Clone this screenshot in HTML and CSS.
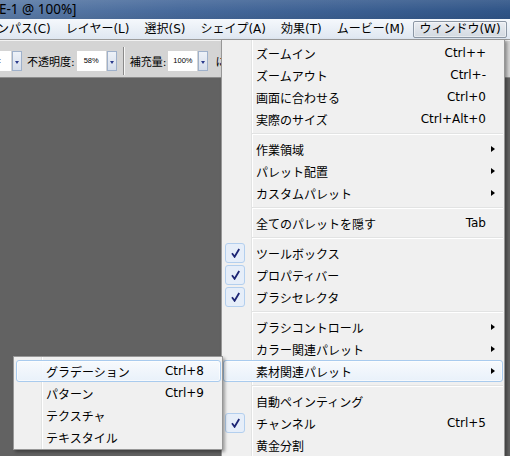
FILE: index.html
```html
<!DOCTYPE html>
<html lang="ja">
<head>
<meta charset="utf-8">
<title>Window menu</title>
<link rel="stylesheet" href="styles.css">
</head>
<body>
<div class="win">
  <div class="titlebar"><span class="title">E-1 @ 100%]</span></div>
  <div class="menubar">
    <span class="mb-item">ンパス(C)</span>
    <span class="mb-item">レイヤー(L)</span>
    <span class="mb-item">選択(S)</span>
    <span class="mb-item">シェイプ(A)</span>
    <span class="mb-item">効果(T)</span>
    <span class="mb-item">ムービー(M)</span>
    <span class="mb-item open">ウィンドウ(W)</span>
  </div>
  <div class="toolbar">
    <div class="combo first"><span class="field"><span class="cut">:</span></span><span class="btn"><i></i></span></div>
    <span class="tlabel">不透明度:</span>
    <div class="combo"><span class="field">58%</span><span class="btn"><i></i></span></div>
    <span class="tsep"></span>
    <span class="tlabel">補充量:</span>
    <div class="combo"><span class="field">100%</span><span class="btn"><i></i></span></div>
    <span class="tlabel ni">に</span>
  </div>
  <div class="canvas"></div>

  <div class="menu main">
    <div class="item"><span class="gut"></span><span class="lbl">ズームイン</span><span class="sc">Ctrl++</span><span class="arr"></span></div>
    <div class="item"><span class="gut"></span><span class="lbl">ズームアウト</span><span class="sc">Ctrl+-</span><span class="arr"></span></div>
    <div class="item"><span class="gut"></span><span class="lbl">画面に合わせる</span><span class="sc">Ctrl+0</span><span class="arr"></span></div>
    <div class="item"><span class="gut"></span><span class="lbl">実際のサイズ</span><span class="sc">Ctrl+Alt+0</span><span class="arr"></span></div>
    <div class="sep"></div>
    <div class="item"><span class="gut"></span><span class="lbl">作業領域</span><span class="sc"></span><span class="arr"><i></i></span></div>
    <div class="item"><span class="gut"></span><span class="lbl">パレット配置</span><span class="sc"></span><span class="arr"><i></i></span></div>
    <div class="item"><span class="gut"></span><span class="lbl">カスタムパレット</span><span class="sc"></span><span class="arr"><i></i></span></div>
    <div class="sep"></div>
    <div class="item"><span class="gut"></span><span class="lbl">全てのパレットを隠す</span><span class="sc">Tab</span><span class="arr"></span></div>
    <div class="sep"></div>
    <div class="item"><span class="gut"><span class="chk"><svg width="9" height="10" viewBox="0 0 9 10"><path d="M1 5.2 L3.6 8.8 L8.2 1" fill="none" stroke="#1d2574" stroke-width="1.8"/></svg></span></span><span class="lbl">ツールボックス</span><span class="sc"></span><span class="arr"></span></div>
    <div class="item"><span class="gut"><span class="chk"><svg width="9" height="10" viewBox="0 0 9 10"><path d="M1 5.2 L3.6 8.8 L8.2 1" fill="none" stroke="#1d2574" stroke-width="1.8"/></svg></span></span><span class="lbl">プロパティバー</span><span class="sc"></span><span class="arr"></span></div>
    <div class="item"><span class="gut"><span class="chk"><svg width="9" height="10" viewBox="0 0 9 10"><path d="M1 5.2 L3.6 8.8 L8.2 1" fill="none" stroke="#1d2574" stroke-width="1.8"/></svg></span></span><span class="lbl">ブラシセレクタ</span><span class="sc"></span><span class="arr"></span></div>
    <div class="sep"></div>
    <div class="item"><span class="gut"></span><span class="lbl">ブラシコントロール</span><span class="sc"></span><span class="arr"><i></i></span></div>
    <div class="item"><span class="gut"></span><span class="lbl">カラー関連パレット</span><span class="sc"></span><span class="arr"><i></i></span></div>
    <div class="item hl"><span class="gut"></span><span class="lbl">素材関連パレット</span><span class="sc"></span><span class="arr"><i></i></span></div>
    <div class="sep"></div>
    <div class="item"><span class="gut"></span><span class="lbl">自動ペインティング</span><span class="sc"></span><span class="arr"></span></div>
    <div class="item"><span class="gut"><span class="chk"><svg width="9" height="10" viewBox="0 0 9 10"><path d="M1 5.2 L3.6 8.8 L8.2 1" fill="none" stroke="#1d2574" stroke-width="1.8"/></svg></span></span><span class="lbl">チャンネル</span><span class="sc">Ctrl+5</span><span class="arr"></span></div>
    <div class="item"><span class="gut"></span><span class="lbl">黄金分割</span><span class="sc"></span><span class="arr"></span></div>
  </div>

  <div class="menu sub">
    <div class="item hl"><span class="gut"></span><span class="lbl">グラデーション</span><span class="sc">Ctrl+8</span><span class="arr"></span></div>
    <div class="item"><span class="gut"></span><span class="lbl">パターン</span><span class="sc">Ctrl+9</span><span class="arr"></span></div>
    <div class="item"><span class="gut"></span><span class="lbl">テクスチャ</span><span class="sc"></span><span class="arr"></span></div>
    <div class="item"><span class="gut"></span><span class="lbl">テキスタイル</span><span class="sc"></span><span class="arr"></span></div>
  </div>
</div>
</body>
</html>
```

FILE: styles.css
```css
html, body {
  margin: 0;
  padding: 0;
}
body {
  width: 510px;
  height: 456px;
  overflow: hidden;
  font-family: "DejaVu Sans", "Noto Sans CJK JP", sans-serif;
  color: #000;
}
.win {
  position: relative;
  width: 510px;
  height: 456px;
  overflow: hidden;
  display: flex;
  flex-direction: column;
  background: #626262;
}

/* title bar */
.titlebar {
  flex: none;
  height: 19px;
  display: flex;
  align-items: center;
  background:
    linear-gradient(to bottom, rgba(255,255,255,0.10), rgba(255,255,255,0) 60%, rgba(0,0,0,0.06)),
    linear-gradient(to right, #5b7ba6 0%, #46699b 35%, #2f5487 100%);
}
.title {
  font-family: "Noto Sans", sans-serif;
  font-size: 13.5px;
  line-height: 19px;
  margin-left: -1px;
  white-space: nowrap;
}

/* menu bar */
.menubar {
  flex: none;
  height: 20px;
  display: flex;
  align-items: center;
  gap: 3px;
  background: linear-gradient(#f5f8fc, #dfe7f1);
}
.mb-item {
  font-size: 12px;
  height: 15px;
  line-height: 15px;
  padding: 0 5px;
  border: 1px solid transparent;
  white-space: nowrap;
}
.mb-item:first-child {
  margin-left: -9px;
}
.mb-item.open {
  border-color: #8c97a5;
  border-radius: 2px;
  background: linear-gradient(#eaedf2, #d3d9e1);
  box-shadow: inset 0 0 0 1px rgba(255,255,255,0.45);
}

/* toolbar */
.toolbar {
  flex: none;
  height: 39px;
  box-sizing: border-box;
  padding-top: 5px;
  border-top: 1px solid #9c9c9c;
  border-bottom: 1px solid #8c8c8c;
  box-shadow: inset 0 1px 0 #f2f2f2;
  background: #d4d4d4;
  display: flex;
  align-items: center;
  font-size: 11px;
  white-space: nowrap;
}
.combo {
  display: flex;
  gap: 1px;
  height: 20px;
  flex: none;
}
.combo .field {
  width: 29px;
  background: #fff;
  font-family: "Liberation Sans", sans-serif;
  font-size: 7.5px;
  line-height: 20px;
  text-align: center;
}
.combo.first .field {
  width: 11px;
  text-align: left;
}
.cut {
  margin-left: -1px;
}
.combo .btn {
  width: 10px;
  box-sizing: border-box;
  border: 1px solid #9fb1cb;
  background: linear-gradient(#eef2f8, #d6deeb);
  display: flex;
  align-items: center;
  justify-content: center;
}
.combo .btn i {
  display: block;
  margin-top: 3px;
  width: 0;
  height: 0;
  border-left: 2.5px solid transparent;
  border-right: 2.5px solid transparent;
  border-top: 3px solid #2b3b8c;
}
.tlabel {
  margin-left: 5px;
  margin-right: 2px;
}
.tsep {
  flex: none;
  width: 1px;
  height: 28px;
  margin: 0 0 0 6px;
  background: #8a8a8a;
  border-right: 1px solid #f6f6f6;
}
.ni {
  margin-left: 7px;
}

.canvas {
  flex: 1;
  background: #626262;
}

/* drop-down menus */
.menu {
  position: absolute;
  box-sizing: border-box;
  border: 1px solid #979797;
  font-size: 12px;
  box-shadow: 2px 2px 3px rgba(0,0,0,0.35);
}
.main {
  left: 221px;
  top: 39px;
  width: 284px;
  padding: 2px 1px;
  background:
    linear-gradient(to right, transparent 29px, #e2e3e3 29px, #e2e3e3 30px, #ffffff 30px, #ffffff 31px, transparent 31px),
    #f0f0f0;
}
.sub {
  left: 13px;
  top: 356px;
  width: 210px;
  padding: 3px 1px 1px 2px;
  background:
    linear-gradient(to right, transparent 27px, #e2e3e3 27px, #e2e3e3 28px, #ffffff 28px, #ffffff 29px, transparent 29px),
    #f0f0f0;
}
.item {
  display: flex;
  align-items: center;
  height: 22px;
  box-sizing: border-box;
  border: 1px solid transparent;
  border-radius: 3px;
  white-space: nowrap;
}
.item.hl {
  border-color: #a9cbee;
  background: linear-gradient(rgba(248,251,254,0.92), rgba(232,241,251,0.92));
  box-shadow: inset 0 0 0 1px rgba(255,255,255,0.6);
}
.gut {
  flex: none;
  width: 32px;
  height: 20px;
  display: flex;
  align-items: center;
}
.sub .gut {
  width: 29px;
}
.lbl {
  flex: 1;
}
.sc {
  flex: none;
}
.arr {
  flex: none;
  width: 16px;
  display: flex;
  align-items: center;
}
.arr i {
  display: block;
  margin-left: 5px;
  width: 0;
  height: 0;
  border-top: 3.5px solid transparent;
  border-bottom: 3.5px solid transparent;
  border-left: 4px solid #000;
}
.chk {
  width: 20px;
  height: 20px;
  margin-left: 1px;
  box-sizing: border-box;
  border: 1px solid #b3cfee;
  border-radius: 3px;
  background: #e6eef9;
  display: flex;
  align-items: center;
  justify-content: center;
}
.sep {
  height: 8px;
  display: flex;
  align-items: center;
  padding-left: 29px;
}
.sep::before {
  content: "";
  flex: 1;
  height: 0;
  border-top: 1px solid #e2e3e3;
  border-bottom: 1px solid #ffffff;
}
```
